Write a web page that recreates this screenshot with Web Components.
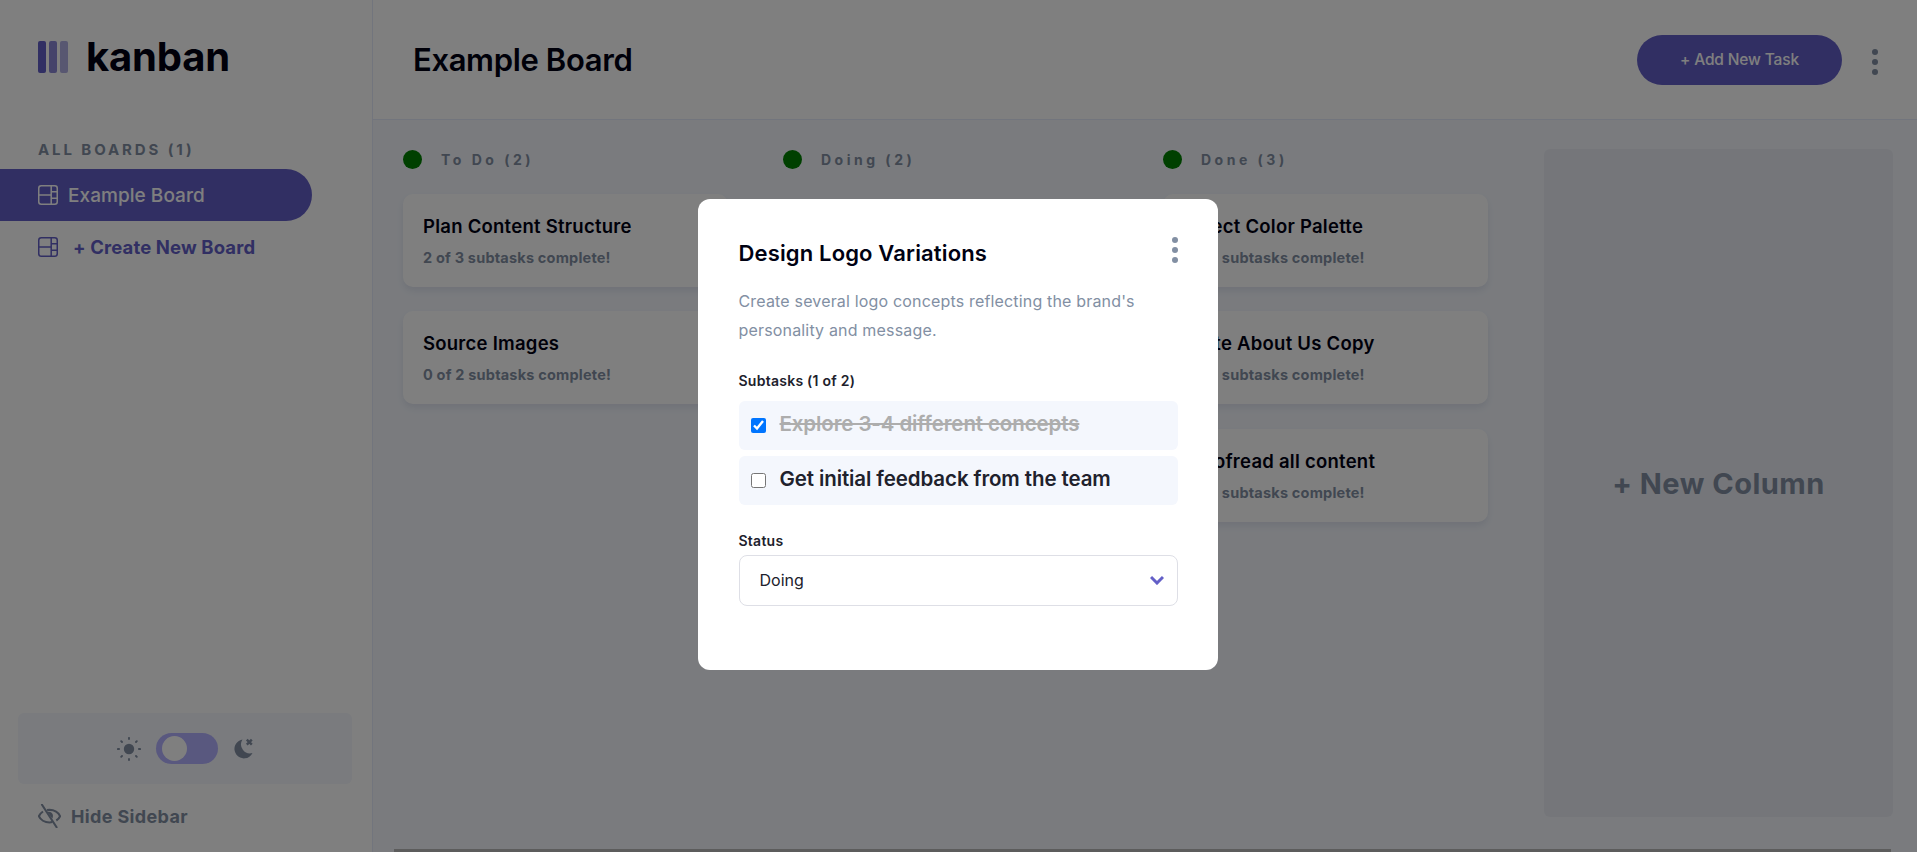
<!DOCTYPE html>
<html lang="en">
<head>
<meta charset="utf-8">
<title>Kanban</title>
<style>
  html, body { margin: 0; height: 100%; overflow: hidden; }
  body { font-family: Inter, "Liberation Sans", sans-serif; color: #000112; background: #f4f7fd; }
</style>
</head>
<body>
<kb-app>
  <kb-sidebar slot="sidebar"></kb-sidebar>
  <kb-header slot="header" title="Example Board"></kb-header>
  <kb-board slot="board">
    <kb-column name="To Do (2)">
      <kb-card title="Plan Content Structure" note="2 of 3 subtasks complete!"></kb-card>
      <kb-card title="Source Images" note="0 of 2 subtasks complete!"></kb-card>
    </kb-column>
    <kb-column name="Doing (2)"></kb-column>
    <kb-column name="Done (3)">
      <kb-card title="Select Color Palette" note="1 of 1 subtasks complete!"></kb-card>
      <kb-card title="Write About Us Copy" note="1 of 1 subtasks complete!"></kb-card>
      <kb-card title="Proofread all content" note="1 of 1 subtasks complete!"></kb-card>
    </kb-column>
  </kb-board>
</kb-app>
<kb-modal title="Design Logo Variations">
  <kb-subtask checked>Explore 3-4 different concepts</kb-subtask>
  <kb-subtask>Get initial feedback from the team</kb-subtask>
</kb-modal>
<script>
const FONT = 'Inter, "Liberation Sans", sans-serif';
const BOARD_ICON = `<svg width="20" height="20" viewBox="0 0 20 20" fill="none" stroke="currentColor" stroke-width="1.5"><rect x=".75" y=".75" width="18.5" height="18.5" rx="2.5"/><path d="M13.2 1v18M1 10h12.2M13.2 6.7H19M13.2 13.3H19"/></svg>`;

function define(name, html, setup) {
  customElements.define(name, class extends HTMLElement {
    constructor() {
      super();
      this.attachShadow({mode: 'open'});
    }
    connectedCallback() {
      let get = key => this.getAttribute(key) || '';
      this.shadowRoot.innerHTML = html(get, this);
      if (setup) setup(this);
    }
  });
}

define('kb-app', () => `
  <style>
    :host { display: grid; grid-template-columns: 373px 1fr; grid-template-rows: 120px 1fr; width: 100vw; height: 100vh; }
    .side { grid-row: 1 / 3; display: flex; min-height: 0; }
    .head { display: flex; min-width: 0; }
    .body { display: flex; min-width: 0; min-height: 0; }
    ::slotted(*) { flex: 1; min-width: 0; }
  </style>
  <div class="side"><slot name="sidebar"></slot></div>
  <div class="head"><slot name="header"></slot></div>
  <div class="body"><slot name="board"></slot></div>`);

define('kb-sidebar', () => `
  <style>
    :host { display: flex; flex-direction: column; background: #fff; border-right: 1px solid #e4ebfa; font-family: ${FONT}; }
    .logo { display: flex; align-items: center; gap: 18px; margin: 41px 0 0 38px; height: 32px; }
    .bars { display: flex; gap: 3px; }
    .bars i { width: 8px; height: 32px; border-radius: 2px; background: #635fc7; }
    .bars i:nth-child(2) { opacity: .75; }
    .bars i:nth-child(3) { opacity: .5; }
    .word { font-size: 40px; font-weight: 700; letter-spacing: -.2px; color: #000112; line-height: 32px; }
    .all { margin: 68px 0 0 38px; font-size: 15px; line-height: 18px; font-weight: 700; letter-spacing: 2.9px; color: #828fa3; }
    .item { display: flex; align-items: center; height: 52px; padding-left: 38px; box-sizing: border-box; }
    .active { margin-top: 10px; width: 312px; border-radius: 0 26px 26px 0; background: #635fc7; color: #fff; gap: 10px; font-size: 19px; font-weight: 500; letter-spacing: .05px; }
    .create { color: #635fc7; gap: 15px; font-size: 18.5px; font-weight: 700; letter-spacing: .13px; }
    .item svg { flex: none; }
    .spacer { flex: 1; }
    .theme { display: flex; align-items: center; justify-content: center; margin: 0 20px 0 18px; height: 71px; background: #f4f7fd; border-radius: 6px; }
    .sun { margin-right: 15px; }
    .moon { margin-left: 15px; }
    .toggle { width: 62px; height: 31px; border-radius: 16px; background: #b3b0ff; display: flex; align-items: center; padding-left: 6px; box-sizing: border-box; }
    .toggle i { width: 25px; height: 25px; border-radius: 50%; background: #fff; }
    .hide { display: flex; align-items: center; gap: 10px; margin: 19px 0 23px 38px; height: 26px; font-size: 18px; font-weight: 700; letter-spacing: .35px; color: #828fa3; }
  </style>
  <div class="logo"><span class="bars"><i></i><i></i><i></i></span><span class="word">kanban</span></div>
  <div class="all">ALL BOARDS (1)</div>
  <div class="item active">${BOARD_ICON}<span>Example Board</span></div>
  <div class="item create">${BOARD_ICON}<span>+ Create New Board</span></div>
  <div class="spacer"></div>
  <div class="theme">
    <svg class="sun" width="24" height="24" viewBox="0 0 24 24" fill="#828fa3" stroke="#828fa3" stroke-width="1.9" stroke-linecap="round"><circle cx="12" cy="12" r="5.2" stroke="none"/><path d="M12 .9v1.2M12 21.9v1.2M.9 12h1.2M21.9 12h1.2M4.2 4.2 5 5M19 19l.8.8M4.2 19.8 5 19M19 5l.8-.8"/></svg>
    <span class="toggle"><i></i></span>
    <svg class="moon" width="20" height="21" viewBox="0 0 20 21" fill="#828fa3"><path d="M9.500 1.500A9.500 9.500 0 1 0 19.500 15A9 9 0 0 1 9.500 1.500z"/><path d="M13.800 1.600l5 5M18.800 1.600l-5 5" stroke="#828fa3" stroke-width="2.400"/></svg>
  </div>
  <div class="hide">
    <svg width="23" height="24" viewBox="0 0 23 24" fill="none" stroke="#828fa3" stroke-width="2.100"><path d="M5 7.500C2.800 9 1.300 10.800.9 12.200c1.500 3.600 5.800 6.300 10.600 6.300 1 0 2-.1 2.800-.4M9 6.100c.8-.2 1.600-.2 2.500-.2 4.800 0 9.100 2.700 10.600 6.300-.7 1.700-2 3.200-3.800 4.300"/><path d="M4 .8 18.600 23.200" stroke-linecap="round"/><path d="M9.300 8c2-1 5.600.3 5.700 3.800 0 1-.3 1.800-.7 2.600z" fill="#828fa3" stroke="none"/></svg>
    <span>Hide Sidebar</span>
  </div>`);

define('kb-header', get => `
  <style>
    :host { display: flex; align-items: center; box-sizing: border-box; padding: 0 39px 0 40px; background: #fff; border-bottom: 1px solid #e4ebfa; font-family: ${FONT}; }
    h1 { flex: 1; margin: 0; font-size: 31px; font-weight: 600; letter-spacing: -.35px; color: #000112; }
    button { width: 205px; height: 50px; margin-right: 30px; border: 0; border-radius: 25px; background: #635fc7; color: #fff; font: 500 15.500px ${FONT}; letter-spacing: -.15px; }
    .dots { display: flex; flex-direction: column; gap: 4px; margin-top: 5px; }
    .dots i { width: 6px; height: 6px; border-radius: 50%; background: #828fa3; }
  </style>
  <h1>${get('title')}</h1>
  <button>+ Add New Task</button>
  <span class="dots"><i></i><i></i><i></i></span>`);

define('kb-board', () => `
  <style>
    :host { display: flex; flex-direction: column; background: #f4f7fd; font-family: ${FONT}; }
    .cols { flex: 1; min-height: 0; display: flex; gap: 55px; padding: 30px 0 0 30px; }
    .new { flex: none; width: 349px; height: 668px; margin: -1px 0 0 1px; display: flex; align-items: center; justify-content: center; box-sizing: border-box; background: #ebedf4; border-radius: 6px; font-size: 29px; font-weight: 700; letter-spacing: .5px; color: #828fa3; }
    .scroll { height: 3px; padding-left: 21px; padding-right: 26px; }
    .scroll i { display: block; height: 3px; background: #b8b8b8; }
  </style>
  <div class="cols">
    <slot></slot>
    <div class="new">+ New Column</div>
  </div>
  <div class="scroll"><i></i></div>`);

define('kb-column', get => `
  <style>
    :host { display: flex; flex-direction: column; flex: none; width: 325px; font-family: ${FONT}; }
    .head { display: flex; align-items: center; gap: 19px; height: 19px; margin-bottom: 25px; font-size: 14px; font-weight: 700; letter-spacing: 3.5px; color: #828fa3; }
    .head i { width: 19px; height: 19px; border-radius: 50%; background: #008000; }
    .list { display: flex; flex-direction: column; gap: 24.800px; }
  </style>
  <div class="head"><i></i><span>${get('name').replace(' ', '&nbsp;')}</span></div>
  <div class="list"><slot></slot></div>`);

define('kb-card', get => `
  <style>
    :host { display: block; box-sizing: border-box; height: 92.700px; padding: 21px 20px 0; background: #fff; border-radius: 10px; box-shadow: 0 4px 6px rgba(54, 78, 126, .1); font-family: ${FONT}; }
    .t { font-size: 18.500px; line-height: 23px; font-weight: 600; letter-spacing: .25px; color: #000112; white-space: nowrap; }
    .n { margin-top: 11px; font-size: 14.500px; line-height: 18px; font-weight: 700; letter-spacing: .2px; color: #828fa3; white-space: nowrap; }
  </style>
  <div class="t">${get('title')}</div>
  <div class="n">${get('note')}</div>`);

define('kb-subtask', (get, el) => `
  <style>
    :host { display: flex; align-items: center; box-sizing: border-box; height: 49px; padding: 0 12px; gap: 14px; background: #f4f7fd; border-radius: 6px; font: 600 20.500px/24px ${FONT}; letter-spacing: -.1px; color: #20212c; white-space: nowrap; }
    :host([checked]) { color: #adadad; }
    :host([checked]) span { text-decoration: line-through; }
    input { width: 15px; height: 15px; margin: 0; flex: none; }
    span { margin-top: -4px; }
  </style>
  <input type="checkbox" ${el.hasAttribute('checked') ? 'checked' : ''}>
  <span><slot></slot></span>`);

define('kb-modal', get => `
  <style>
    :host { position: fixed; inset: 0; display: flex; align-items: center; justify-content: center; background: rgba(0, 0, 0, .5); font-family: ${FONT}; }
    .box { width: 520px; height: 471px; margin: 17px 2px 0 0; padding: 39px 40px 39px 41px; box-sizing: border-box; background: #fff; border-radius: 12px; }
    .top { display: flex; justify-content: space-between; height: 30px; }
    h2 { margin: 0; font-size: 22px; line-height: 30px; font-weight: 600; letter-spacing: .15px; color: #000112; }
    .dots { display: flex; flex-direction: column; gap: 4px; margin-top: -1px; }
    .dots i { width: 6px; height: 6px; border-radius: 50%; background: #828fa3; }
    p { margin: 19px 0 0; font-size: 16px; line-height: 29px; font-weight: 400; letter-spacing: .17px; color: #828fa3; }
    .label { font-size: 14px; line-height: 18px; font-weight: 600; letter-spacing: .25px; color: #20212c; }
    .sub { margin-top: 27px; }
    .list { display: flex; flex-direction: column; gap: 6px; margin-top: 11px; }
    .stat { margin-top: 27px; }
    .select { display: flex; align-items: center; justify-content: space-between; height: 51px; margin-top: 5px; padding: 0 13px 2px 20px; box-sizing: border-box; border: 1.500px solid #dedfe6; border-radius: 8px; font-size: 16px; color: #20212c; }
  </style>
  <div class="box">
    <div class="top"><h2>${get('title')}</h2><span class="dots"><i></i><i></i><i></i></span></div>
    <p>Create several logo concepts reflecting the brand's personality and message.</p>
    <div class="label sub">Subtasks (1 of 2)</div>
    <div class="list"><slot></slot></div>
    <div class="label stat">Status</div>
    <div class="select"><span>Doing</span><svg width="14" height="10" viewBox="0 0 14 10" fill="none" stroke="#635fc7" stroke-width="3"><path d="M1 2l6 6 6-6"/></svg></div>
  </div>`);
</script>
</body>
</html>
